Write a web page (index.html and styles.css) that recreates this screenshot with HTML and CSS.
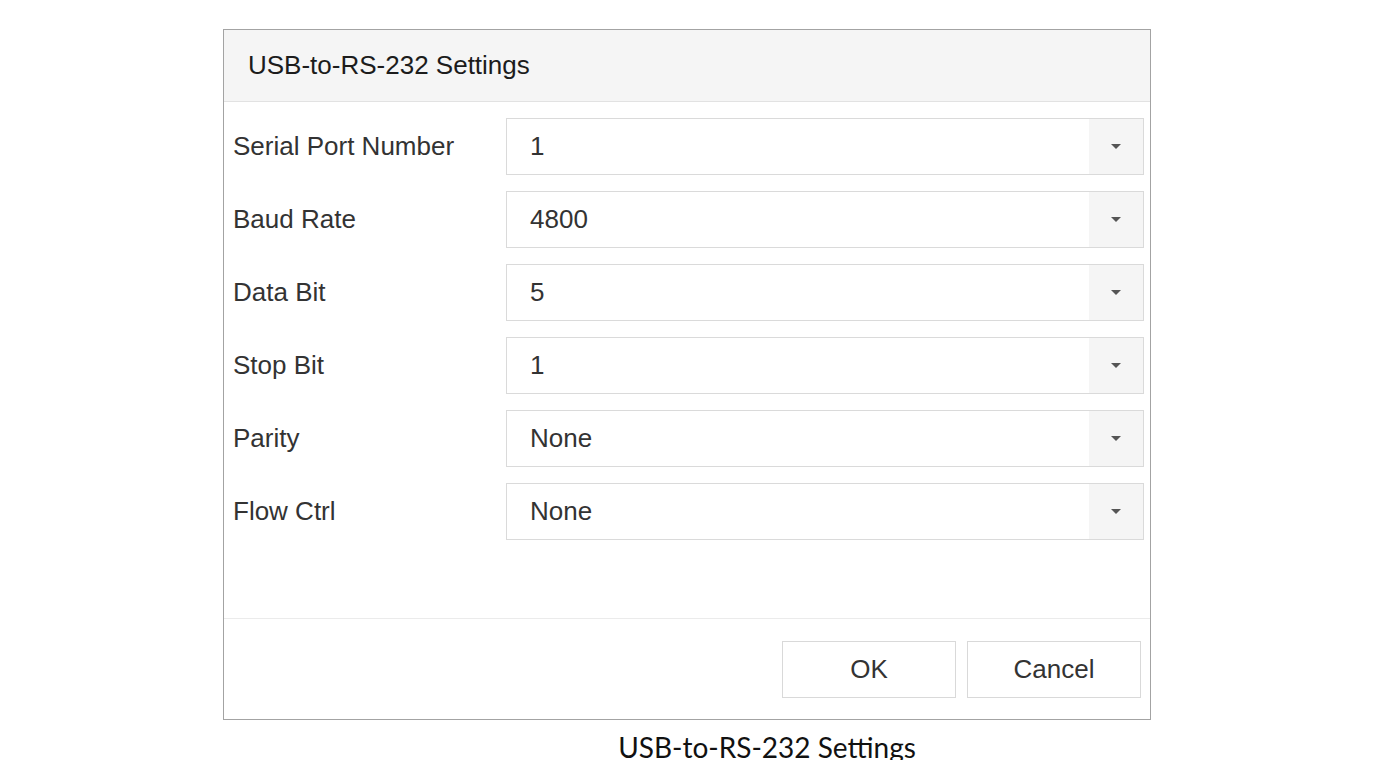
FILE: index.html
```html
<!DOCTYPE html>
<html lang="en">
<head>
    <meta charset="UTF-8" />
    <title>USB-to-RS-232 Settings</title>
    <link rel="stylesheet" href="styles.css">
</head>
<body>
    <div class="page">
        <div class="dialog">
            <div class="dialog-header">USB-to-RS-232 Settings</div>

            <div class="dialog-body">
                <div class="form-row">
                    <div class="form-label">Serial Port Number</div>
                    <div class="select">
                        <span class="select-value">1</span>
                        <span class="select-arrow"></span>
                    </div>
                </div>
                <div class="form-row">
                    <div class="form-label">Baud Rate</div>
                    <div class="select">
                        <span class="select-value">4800</span>
                        <span class="select-arrow"></span>
                    </div>
                </div>
                <div class="form-row">
                    <div class="form-label">Data Bit</div>
                    <div class="select">
                        <span class="select-value">5</span>
                        <span class="select-arrow"></span>
                    </div>
                </div>
                <div class="form-row">
                    <div class="form-label">Stop Bit</div>
                    <div class="select">
                        <span class="select-value">1</span>
                        <span class="select-arrow"></span>
                    </div>
                </div>
                <div class="form-row">
                    <div class="form-label">Parity</div>
                    <div class="select">
                        <span class="select-value">None</span>
                        <span class="select-arrow"></span>
                    </div>
                </div>
                <div class="form-row">
                    <div class="form-label">Flow Ctrl</div>
                    <div class="select">
                        <span class="select-value">None</span>
                        <span class="select-arrow"></span>
                    </div>
                </div>
            </div>

            <div class="dialog-footer">
                <button class="btn">OK</button>
                <button class="btn">Cancel</button>
            </div>
        </div>

        <div class="caption">USB-to-RS-232 Settings</div>
    </div>
</body>
</html>
```

FILE: styles.css
```css
* {
    margin: 0;
    padding: 0;
    box-sizing: border-box;
}

html, body {
    background: #ffffff;
}

body {
    width: 1380px;
    height: 760px;
    overflow: hidden;
    font-family: "Liberation Sans", Arial, sans-serif;
}

.page {
    padding-top: 29px;
}

.dialog {
    width: 928px;
    margin-left: 223px;
    border: 1px solid #a3a3a3;
    background: #ffffff;
    display: flex;
    flex-direction: column;
}

.dialog-header {
    height: 72px;
    background: #f5f5f5;
    border-bottom: 1px solid #e2e2e2;
    padding-left: 24px;
    display: flex;
    align-items: center;
    font-size: 26px;
    color: #1c1c1c;
}

.dialog-body {
    height: 516px;
    padding: 16px 6px 0 9px;
    display: flex;
    flex-direction: column;
    gap: 16px;
}

.form-row {
    display: flex;
    align-items: center;
    height: 57px;
}

.form-label {
    width: 273px;
    flex-shrink: 0;
    font-size: 26px;
    color: #333333;
}

.select {
    flex: 1;
    height: 57px;
    border: 1px solid #dadada;
    display: flex;
    align-items: center;
}

.select-value {
    flex: 1;
    padding-left: 23px;
    font-size: 26px;
    color: #333333;
}

.select-arrow {
    width: 54px;
    height: 100%;
    background: #f5f5f5;
    display: flex;
    align-items: center;
    justify-content: center;
}

.select-arrow::after {
    content: "";
    width: 0;
    height: 0;
    border-left: 5px solid transparent;
    border-right: 5px solid transparent;
    border-top: 5px solid #555555;
}

.dialog-footer {
    border-top: 1px solid #ebebeb;
    padding: 22px 9px 21px 0;
    display: flex;
    justify-content: flex-end;
    gap: 11px;
}

.btn {
    width: 174px;
    height: 57px;
    background: #ffffff;
    border: 1px solid #d9d9d9;
    font-family: "Liberation Sans", Arial, sans-serif;
    font-size: 26px;
    color: #333333;
}

.caption {
    padding-left: 154px;
    margin-top: 10px;
    text-align: center;
    font-family: Lato, "Open Sans", sans-serif;
    font-size: 28px;
    color: #111111;
}
```
